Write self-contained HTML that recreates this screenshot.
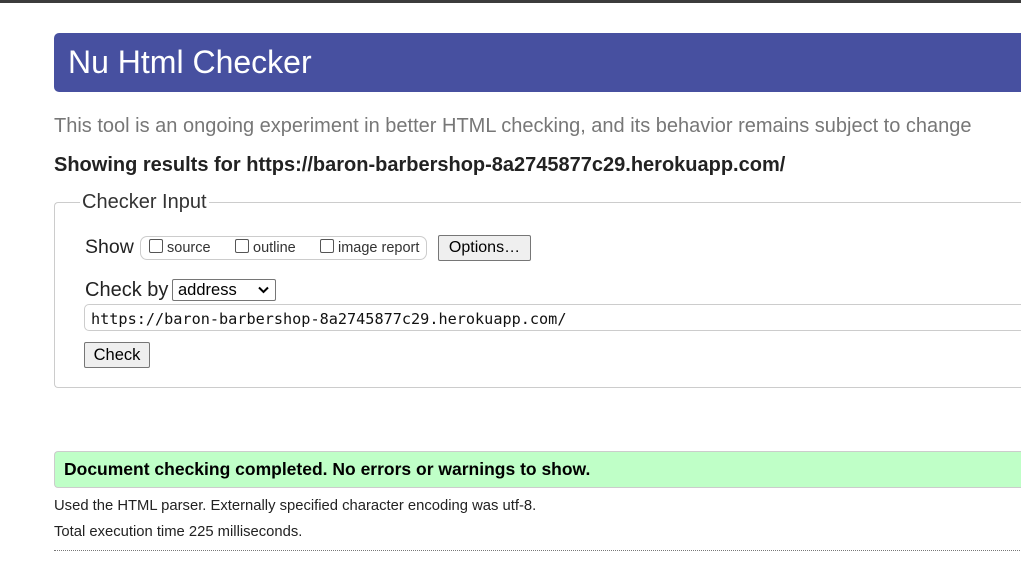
<!DOCTYPE html>
<html><head><style>
body{margin:0;width:1021px;height:580px;overflow:hidden;background:#fff;font-family:"Liberation Sans",Arial,sans-serif;position:relative}
.a{position:absolute;white-space:nowrap}
.cb{display:inline-block;width:12px;height:12px;border:1px solid #555;border-radius:2px;vertical-align:-1px;margin-right:4px;background:#fff}
.btn{position:absolute;background:#efefef;border:1px solid #767676;border-radius:2px;font-size:16px;color:#000;box-sizing:border-box;text-align:center}
</style></head><body>
<div class="a" style="left:0;top:0;width:1021px;height:3px;background:#3c3c3c"></div>
<div class="a" style="left:54px;top:33px;width:980px;height:59px;background:#4750a0;border-radius:5px"></div>
<div class="a" style="left:68px;top:44px;font-size:32px;color:#fff">Nu Html Checker</div>
<div class="a" style="left:54px;top:115px;font-size:20px;color:#777">This tool is an ongoing experiment in better HTML checking, and its behavior remains subject to change</div>
<div class="a" style="left:54px;top:154px;font-size:20px;font-weight:bold;color:#222">Showing results for https://baron-barbershop-8a2745877c29.herokuapp.com/</div>
<div class="a" style="left:54px;top:202px;width:980px;height:184px;border:1px solid #ccc;border-right:none;border-radius:4px 0 0 4px"></div>
<div class="a" style="left:80px;top:191px;font-size:20px;color:#333;background:#fff;padding:0 2px">Checker Input</div>
<div class="a" style="left:85px;top:236px;font-size:19.5px;color:#222">Show</div>
<div class="a" style="left:140px;top:236px;width:285px;height:22px;border:1px solid #ccc;border-radius:7px"></div>
<div class="a" style="left:149px;top:239px;font-size:14.5px;color:#333"><span class="cb"></span>source</div>
<div class="a" style="left:235px;top:239px;font-size:14.5px;color:#333"><span class="cb"></span>outline</div>
<div class="a" style="left:320px;top:239px;font-size:14.5px;color:#333"><span class="cb"></span>image report</div>
<div class="btn" style="left:438px;top:235px;width:93px;height:26px;line-height:24px">Options…</div>
<div class="a" style="left:85px;top:279px;font-size:20px;color:#222">Check by</div>
<div class="a" style="left:172px;top:279px;width:104px;height:22px;border:1px solid #767676;border-radius:2px;box-sizing:border-box;font-size:16.5px;padding-left:5px;line-height:20px">address<svg style="position:absolute;right:6px;top:6px" width="11" height="8" viewBox="0 0 11 8"><path d="M1 1.5L5.5 6 10 1.5" stroke="#000" stroke-width="2" fill="none"/></svg></div>
<div class="a" style="left:84px;top:304px;width:960px;height:27px;border:1px solid #ccc;border-radius:5px;box-sizing:border-box"></div>
<div class="a" style="left:91px;top:310px;font-family:'DejaVu Sans Mono','Liberation Mono',monospace;font-size:15.2px;color:#111">https://baron-barbershop-8a2745877c29.herokuapp.com/</div>
<div class="btn" style="left:84px;top:342px;width:66px;height:26px;line-height:24px;font-size:16.5px">Check</div>
<div class="a" style="left:54px;top:451px;width:980px;height:37px;background:#bfffc7;border:1px solid #ccc;border-right:none;border-radius:4px;box-sizing:border-box"></div>
<div class="a" style="left:64px;top:459px;font-size:17.5px;font-weight:bold;color:#000">Document checking completed. No errors or warnings to show.</div>
<div class="a" style="left:54px;top:498px;font-size:14.8px;color:#222">Used the HTML parser. Externally specified character encoding was utf-8.</div>
<div class="a" style="left:54px;top:524px;font-size:14.8px;color:#222">Total execution time 225 milliseconds.</div>
<div class="a" style="left:54px;top:550px;width:970px;border-top:1px dotted #777"></div>
</body></html>
